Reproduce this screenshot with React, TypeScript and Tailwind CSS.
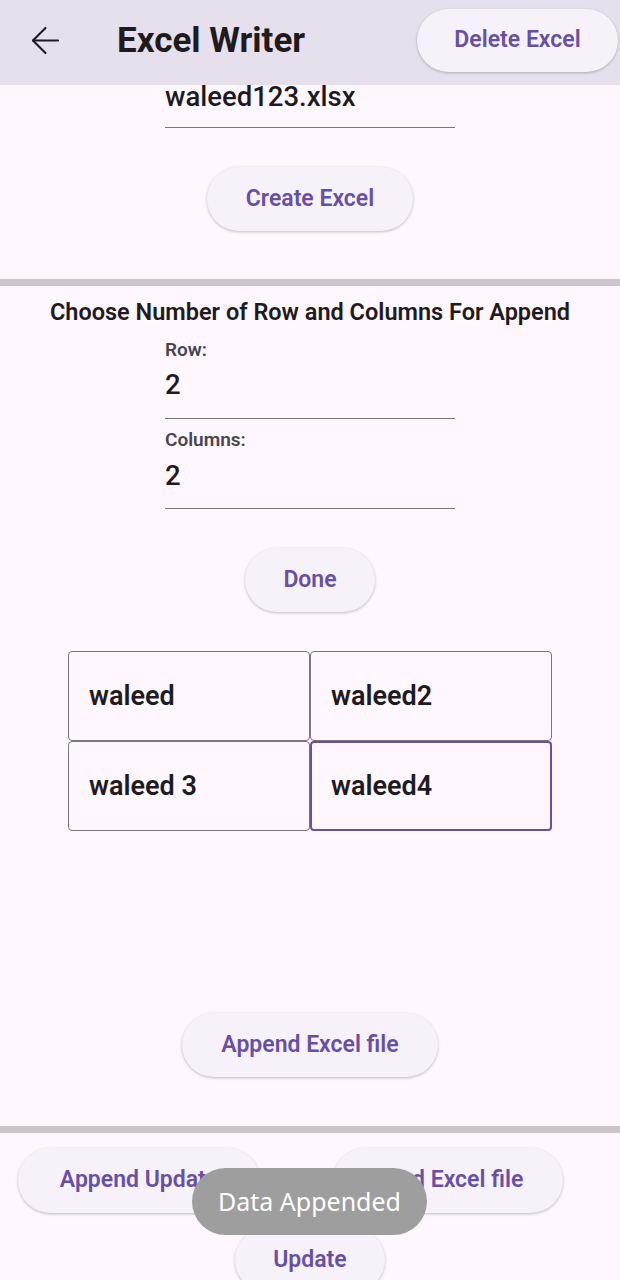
import { ArrowLeft } from "lucide-react";

const pill =
  "rounded-full bg-[#f7f2fa] text-[#6750a4] font-semibold text-[23px] shadow-[0_1px_3px_rgba(0,0,0,0.25)] flex items-center justify-center shrink-0";

function Label({ children, className = "" }: { children: string; className?: string }) {
  return <span className={`text-[19px] leading-[22px] font-semibold text-[#49454f] ${className}`}>{children}</span>;
}

function Value({ children, className = "" }: { children: string; className?: string }) {
  return <span className={`text-[27.5px] leading-[30px] font-medium text-[#1d1b20] ${className}`}>{children}</span>;
}

export default function App() {
  const cells = ["waleed", "waleed2", "waleed 3", "waleed4"];

  return (
    <div className="relative w-[620px] h-[1280px] overflow-hidden bg-[#fef7ff] font-['Roboto',sans-serif] text-[#1d1b20]">
      {/* app bar */}
      <header className="relative z-10 h-[85px] bg-[#e6e0ec] flex items-center pb-[4px]">
        <ArrowLeft className="ml-[24px] w-[43px] h-[43px] text-[#1d1b20]" strokeWidth={1.15} />
        <h1 className="ml-[50px] text-[35px] leading-none font-bold">Excel Writer</h1>
        <button className={`${pill} ml-auto mr-[2px] h-[63px] w-[201px]`}>Delete Excel</button>
      </header>

      {/* file name */}
      <section className="flex flex-col items-center">
        <div className="w-[290px] flex flex-col">
          <Value className="-mt-[4px] h-[32px] leading-[32px]">waleed123.xlsx</Value>
          <div className="h-px bg-[#79747e] mt-[14px]" />
        </div>
        <button className={`${pill} mt-[39px] h-[64px] w-[206px]`}>Create Excel</button>
      </section>

      <div className="mt-[48px] h-[7px] bg-[#cac4d0]" />

      {/* append config */}
      <section className="flex flex-col items-center">
        <h2 className="mt-[12px] text-[23.5px] leading-[28px] font-semibold">Choose Number of Row and Columns For Append</h2>
        <div className="w-[290px] flex flex-col">
          <Label className="mt-[13px]">Row:</Label>
          <Value className="mt-[9px]">2</Value>
          <div className="h-px bg-[#79747e] mt-[18px]" />
          <Label className="mt-[10px]">Columns:</Label>
          <Value className="mt-[10px]">2</Value>
          <div className="h-px bg-[#79747e] mt-[17px]" />
        </div>
        <button className={`${pill} mt-[39px] h-[64px] w-[130px]`}>Done</button>

        <div className="mt-[39px] grid grid-cols-2 w-[484px]">
          {cells.map((c, i) => (
            <div
              key={c}
              className={`h-[90px] flex items-center rounded-[4px] text-[27px] font-semibold ${
                i === 3 ? "border-2 border-[#6750a4] px-[19px]" : "border border-[#79747e] px-[20px]"
              }`}
            >
              {c}
            </div>
          ))}
        </div>

        <button className={`${pill} mt-[182px] h-[64px] w-[256px]`}>Append Excel file</button>
      </section>

      <div className="mt-[49px] h-[7px] bg-[#cac4d0]" />

      {/* bottom actions */}
      <section className="flex flex-col">
        <div className="flex mt-[15px] pl-[18px] gap-[73px]">
          <button className={`${pill} h-[65px] w-[242px]`}>Append Update</button>
          <button className={`${pill} h-[65px] w-[230px]`}>Read Excel file</button>
        </div>
        <div className="flex justify-center mt-[15px]">
          <button className={`${pill} h-[64px] w-[150px]`}>Update</button>
        </div>
      </section>

      {/* toast */}
      <div className="absolute left-[192px] top-[1168px] w-[235px] h-[67px] rounded-full bg-[#9e9e9e] flex items-center justify-center text-white text-[25px] font-['Noto_Sans',sans-serif]">
        Data Appended
      </div>
    </div>
  );
}
